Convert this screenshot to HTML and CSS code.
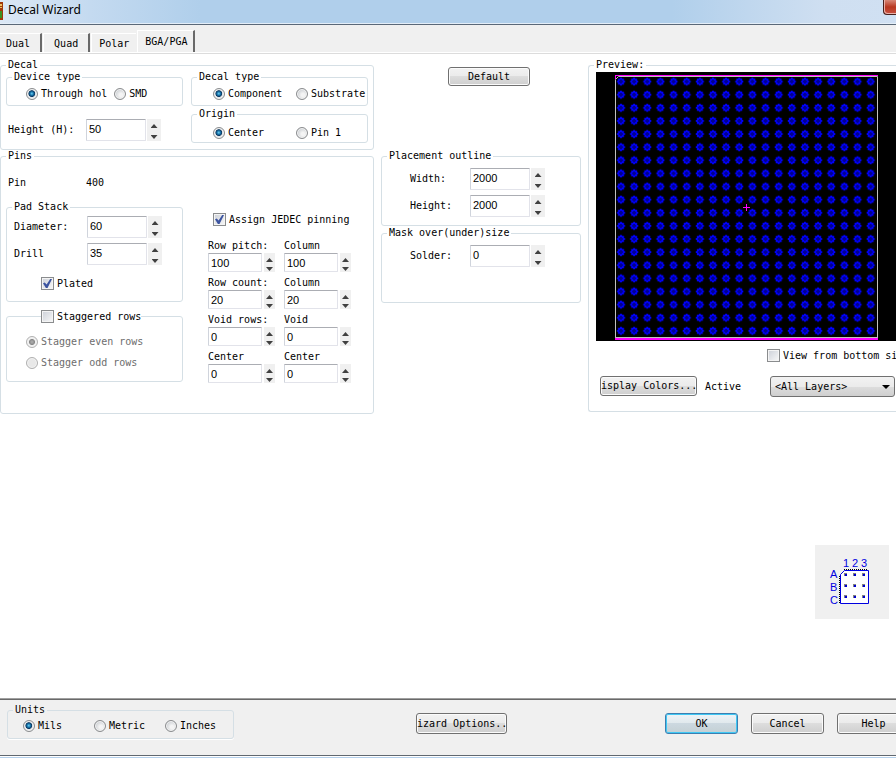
FILE: index.html
```html
<!DOCTYPE html>
<html lang="en">
<head>
<meta charset="utf-8">
<title>Decal Wizard</title>
<link rel="stylesheet" href="styles.css">
</head>
<body>
<header class="titlebar">
  <svg class="app-icon" width="3" height="18" viewBox="0 0 3 18" aria-hidden="true"><path fill="#a03808" d="M0 0h3v18H0z"/><path fill="#f0c060" d="M0 2h2v2H0zM0 5h2v1H0z"/><path fill="#3c9020" d="M0 9h2v7H0z"/></svg>
  <h1>Decal Wizard</h1>
  <button class="close" type="button" aria-label="Close"></button>
</header>
<nav class="tabs" role="tablist">
  <button type="button" role="tab" class="tab">Dual</button>
  <button type="button" role="tab" class="tab">Quad</button>
  <button type="button" role="tab" class="tab">Polar</button>
  <button type="button" role="tab" class="tab active" aria-selected="true">BGA/PGA</button>
</nav>
<main class="page">
  <div class="columns">
    <div class="col">
      <fieldset class="group decal">
        <legend>Decal</legend>
        <div>
          <fieldset class="group">
            <legend>Device type</legend>
            <div class="radios device">
              <label><input type="radio" name="device" checked>Through hol</label>
              <label><input type="radio" name="device">SMD</label>
            </div>
          </fieldset>
          <div class="field height-field">
            <label for="height">Height (H):</label>
            <span class="spin"><input id="height" type="text" value="50"><span class="arrows"><button type="button" aria-label="Up"></button><button type="button" aria-label="Down"></button></span></span>
          </div>
        </div>
        <div class="stack">
          <fieldset class="group">
            <legend>Decal type</legend>
            <div class="radios pair">
              <label><input type="radio" name="dtype" checked>Component</label>
              <label><input type="radio" name="dtype">Substrate</label>
            </div>
          </fieldset>
          <fieldset class="group">
            <legend>Origin</legend>
            <div class="radios pair origin">
              <label><input type="radio" name="origin" checked>Center</label>
              <label><input type="radio" name="origin">Pin 1</label>
            </div>
          </fieldset>
        </div>
      </fieldset>
      <fieldset class="group pins">
        <legend>Pins</legend>
        <div>
          <div class="pin-count"><span>Pin</span><output>400</output></div>
          <fieldset class="group pad-stack">
            <legend>Pad Stack</legend>
            <div class="field">
              <label for="diameter">Diameter:</label>
              <span class="spin"><input id="diameter" type="text" value="60"><span class="arrows"><button type="button" aria-label="Up"></button><button type="button" aria-label="Down"></button></span></span>
            </div>
            <div class="field">
              <label for="drill">Drill</label>
              <span class="spin"><input id="drill" type="text" value="35"><span class="arrows"><button type="button" aria-label="Up"></button><button type="button" aria-label="Down"></button></span></span>
            </div>
            <label class="check plated"><input type="checkbox" checked>Plated</label>
          </fieldset>
          <fieldset class="group staggered">
            <legend><label class="check"><input type="checkbox">Staggered rows</label></legend>
            <div class="stagger-options">
              <label><input type="radio" name="stagger" checked disabled>Stagger even rows</label>
              <label><input type="radio" name="stagger" disabled>Stagger odd rows</label>
            </div>
          </fieldset>
        </div>
        <div class="pinning">
          <label class="check jedec"><input type="checkbox" checked>Assign JEDEC pinning</label>
          <div class="matrix">
            <div class="cell"><label for="rp">Row pitch:</label><span class="spin small"><input id="rp" type="text" value="100"><span class="arrows"><button type="button" aria-label="Up"></button><button type="button" aria-label="Down"></button></span></span></div>
            <div class="cell"><label for="cp">Column</label><span class="spin small"><input id="cp" type="text" value="100"><span class="arrows"><button type="button" aria-label="Up"></button><button type="button" aria-label="Down"></button></span></span></div>
            <div class="cell"><label for="rc">Row count:</label><span class="spin small"><input id="rc" type="text" value="20"><span class="arrows"><button type="button" aria-label="Up"></button><button type="button" aria-label="Down"></button></span></span></div>
            <div class="cell"><label for="cc">Column</label><span class="spin small"><input id="cc" type="text" value="20"><span class="arrows"><button type="button" aria-label="Up"></button><button type="button" aria-label="Down"></button></span></span></div>
            <div class="cell"><label for="vr">Void rows:</label><span class="spin small"><input id="vr" type="text" value="0"><span class="arrows"><button type="button" aria-label="Up"></button><button type="button" aria-label="Down"></button></span></span></div>
            <div class="cell"><label for="vc">Void</label><span class="spin small"><input id="vc" type="text" value="0"><span class="arrows"><button type="button" aria-label="Up"></button><button type="button" aria-label="Down"></button></span></span></div>
            <div class="cell"><label for="cr">Center</label><span class="spin small"><input id="cr" type="text" value="0"><span class="arrows"><button type="button" aria-label="Up"></button><button type="button" aria-label="Down"></button></span></span></div>
            <div class="cell"><label for="ce">Center</label><span class="spin small"><input id="ce" type="text" value="0"><span class="arrows"><button type="button" aria-label="Up"></button><button type="button" aria-label="Down"></button></span></span></div>
          </div>
        </div>
      </fieldset>
    </div>

    <div class="col middle">
      <button type="button" class="btn default">Default</button>
      <fieldset class="group outline">
        <legend>Placement outline</legend>
        <div class="field">
          <label for="ow">Width:</label>
          <span class="spin"><input id="ow" type="text" value="2000"><span class="arrows"><button type="button" aria-label="Up"></button><button type="button" aria-label="Down"></button></span></span>
        </div>
        <div class="field">
          <label for="oh">Height:</label>
          <span class="spin"><input id="oh" type="text" value="2000"><span class="arrows"><button type="button" aria-label="Up"></button><button type="button" aria-label="Down"></button></span></span>
        </div>
      </fieldset>
      <fieldset class="group mask">
        <legend>Mask over(under)size</legend>
        <div class="field">
          <label for="solder">Solder:</label>
          <span class="spin"><input id="solder" type="text" value="0"><span class="arrows"><button type="button" aria-label="Up"></button><button type="button" aria-label="Down"></button></span></span>
        </div>
      </fieldset>
    </div>

    <fieldset class="group preview">
      <legend>Preview:</legend>
      <div class="board">
        <svg width="300" height="269" viewBox="0 0 300 269" role="img" aria-label="Pin array">
          <defs>
            <pattern id="pad" x="18.4" y="3" width="13.14" height="13.12" patternUnits="userSpaceOnUse">
              <path fill="#0000ff" d="M5.6 2.6h2v1h2v2h1v2h-1v2h-2v1h-2v-1h-2v-2h-1v-2h1v-2h2z"/>
              <path fill="#000090" d="M5.6 4.6h2v1h1v2h-1v1h-2v-1h-1v-2h1z"/>
            </pattern>
          </defs>
          <rect x="18.4" y="3" width="262.8" height="262.4" fill="url(#pad)"/>
          <path d="M19.500 266V7.500L22.500 4.500H281.500V266" fill="none" stroke="#c0c0c0"/>
          <path d="M19 265.500H282" stroke="#c0c0c0"/>
          <path d="M19 3.500H282M19.500 3V7" stroke="#ff00ff" fill="none"/>
          <path d="M19 267H282" stroke="#ff00ff" stroke-width="2"/>
          <path d="M147 135.500h7M150.500 132v7" stroke="#ff00ff"/>
        </svg>
      </div>
      <label class="check bottom-view"><input type="checkbox">View from bottom si</label>
      <div class="layer-row">
        <button type="button" class="btn">isplay Colors...</button>
        <label for="layers">Active</label>
        <span class="select"><select id="layers"><option>&lt;All Layers&gt;</option></select></span>
      </div>
    </fieldset>
  </div>
  <div class="numbering">
    <svg width="74" height="74" viewBox="0 0 74 74" role="img" aria-label="Pin numbering">
      <g class="numbering-text"><text x="28" y="22">1</text><text x="37" y="22">2</text><text x="46" y="22">3</text><text x="15" y="33">A</text><text x="15" y="46">B</text><text x="15" y="59">C</text></g>
      <path d="M25.500 58.500V29.500L29.500 25.500H53.500V58.500Z" fill="#fff" stroke="#0000e0"/>
      <path d="M24.500 58V30M29 24.500H53" stroke="#000" stroke-dasharray="1 1" fill="none"/>
      <path d="M29 29.500h3m6 0h3m6 0h3M29 40.500h3m6 0h3m6 0h3M29 51.500h3m6 0h3m6 0h3" stroke="#808080" stroke-width="3"/>
      <path d="M30 30h2m7 0h2m7 0h2M30 41h2m7 0h2m7 0h2M30 52h2m7 0h2m7 0h2" stroke="#0000d0" stroke-width="2"/>
    </svg>
  </div>
</main>
<footer class="footer">
  <fieldset class="group units">
    <legend>Units</legend>
    <div class="radios">
      <label><input type="radio" name="units" checked>Mils</label>
      <label><input type="radio" name="units">Metric</label>
      <label><input type="radio" name="units">Inches</label>
    </div>
  </fieldset>
  <button type="button" class="btn options">izard Options..</button>
  <div class="actions">
    <button type="button" class="btn primary">OK</button>
    <button type="button" class="btn">Cancel</button>
    <button type="button" class="btn">Help</button>
  </div>
</footer>
</body>
</html>
```
FILE: styles.css
```css
* { box-sizing: border-box; }
body {
  margin: 0;
  min-height: 100vh;
  display: flex;
  flex-direction: column;
  overflow: hidden;
  background: #fff;
  color: #000;
  font: 10px/12px "DejaVu Sans Mono", "Liberation Mono", monospace;
  white-space: nowrap;
}
button, input, select { font: inherit; color: inherit; margin: 0; padding: 0; }

/* Title bar */
.titlebar {
  display: flex;
  align-items: flex-start;
  height: 25px;
  border-bottom: 1px solid #5a6878;
  box-shadow: inset 0 -1px #e4eef8;
  background: linear-gradient(90deg, #dce8f5 0, #c4daf0 90px, #b0cfeb 200px, #b0cfeb 75%, #cfdff1 92%, #d0e0f2 100%);
}
.app-icon { margin-top: 2px; }
.titlebar h1 { margin: 0 0 0 5px; font: 12px/19px "Noto Sans", "Open Sans", sans-serif; }
.close {
  width: 13px;
  height: 15px;
  margin-left: auto;
  border: 1px solid #48201c;
  border-width: 0 0 1px 1px;
  border-radius: 0 0 0 4px;
  background: linear-gradient(#d88878, #b83820 50%, #c85040);
  box-shadow: inset 1px -1px #e8b0a8;
}

/* Tabs */
.tabs {
  display: flex;
  align-items: flex-end;
  gap: 1px;
  height: 29px;
  background: #f0f0f0;
  border-bottom: 1px solid #dcdcdc;
  box-shadow: inset 0 -1px #fff;
}
.tab {
  height: 19px;
  padding: 2px 10px 0;
  margin-bottom: 1px;
  border: solid;
  border-width: 1px 2px 0 1px;
  border-color: #fff #696969 #fff #fff;
  background: #f0f0f0;
}
.tab:first-child { padding-left: 6px; border-left: 0; }
.tab:nth-child(3) { padding: 2px 7px 0; border-right-width: 0; }
.tab.active { height: 22px; padding: 0 6px 0 7px; }

/* Page */
.page { flex: 1; display: flex; flex-direction: column; padding-top: 5px; }
.columns { display: grid; grid-template-columns: 374px 200px minmax(308px, 1fr); gap: 7px; align-items: start; }
.group {
  margin: 0;
  padding: 0;
  min-width: 0;
  border: 1px solid #d5dfe5;
  border-radius: 3px;
}
.group > legend { margin-left: 5px; padding: 0 2px; }
.decal, .pins { display: grid; grid-template-columns: 177px 177px; gap: 8px; padding: 0 5px 6px; }
.decal > legend, .pins > legend { margin-left: 0; }
.pins { padding-bottom: 30px; }
.stack { display: grid; gap: 2px; }

label { display: flex; align-items: center; }
.radios { display: flex; height: 22px; padding-left: 19px; }
.radios label { gap: 3px; }
.device { gap: 7px; }
.pair { display: grid; grid-template-columns: 83px auto; padding-left: 21px; justify-content: start; }
.origin { padding-top: 4px; }

input[type="radio"] {
  appearance: none;
  flex: none;
  width: 12px;
  height: 12px;
  border: 1px solid #8a8c8e;
  border-radius: 50%;
  background: radial-gradient(circle at 60% 60%, #f4f4f4 20%, #c8ccd0 75%);
  box-shadow: inset 0 0 0 1px #f4f4f4;
}
input[type="radio"]:checked {
  background: radial-gradient(circle at 48% 46%, #70d0f0 0, #1878b0 22%, #0c3860 40%, #e0e4e8 50%);
}
input[type="radio"]:disabled { border-color: #b0b0b0; background: #e8e8e8; }
input[type="radio"]:disabled:checked { background: radial-gradient(circle, #b0b0b0 0, #888 38%, #eee 46%); }
.check { gap: 3px; }
input[type="checkbox"] {
  appearance: none;
  flex: none;
  display: grid;
  place-items: center;
  width: 13px;
  height: 13px;
  border: 1px solid #8a8c8e;
  background: linear-gradient(135deg, #ccd0d8, #f8f8f8);
  box-shadow: inset 0 0 0 1px #f4f4f4;
}
input[type="checkbox"]:checked::before {
  content: "";
  width: 9px;
  height: 9px;
  background: #3c54a0;
  clip-path: polygon(0 48%, 20% 38%, 40% 62%, 80% 0, 100% 0, 50% 100%, 32% 100%);
}

/* Spin fields */
.field { display: grid; grid-template-columns: 78px auto; justify-content: start; }
.spin { display: flex; gap: 1px; height: 22px; }
.spin input {
  width: 60px;
  padding: 0 0 3px 2px;
  border: 1px solid #e2e3ea;
  border-top-color: #abadb3;
  border-left-color: #d0d4dc;
  border-radius: 1px;
  background: #fff;
  font: 11px/14px "Liberation Sans", sans-serif;
}
.arrows {
  display: flex;
  flex-direction: column;
  justify-content: space-between;
  align-items: center;
  width: 14px;
  padding: 5px 0 2px;
  background: #f0f0f0;
}
.arrows button {
  width: 7px;
  height: 4px;
  border: 0;
  background: #404040;
  clip-path: polygon(50% 0, 100% 100%, 0 100%);
}
.arrows button + button { clip-path: polygon(0 0, 100% 0, 50% 100%); }
.small { height: 19px; gap: 2px; }
.small input { width: 54px; padding-bottom: 0; }
.small .arrows { width: 11px; padding: 5px 0 1px; }
.height-field { margin: 13px 0 0 2px; }

/* Pins */
.pin-count { display: grid; grid-template-columns: 78px auto; justify-content: start; padding: 15px 0 12px 2px; }
.pad-stack { padding: 3px 0 11px 7px; }
.pad-stack .field { grid-template-columns: 73px auto; margin-bottom: 5px; }
.pad-stack .plated { margin: 12px 0 0 27px; }
.pad-stack > legend { margin-left: -2px; }
.staggered { margin-top: 8px; padding-bottom: 12px; }
.staggered > legend { margin-left: 34px; padding: 0; background: #fff; }
.stagger-options { display: grid; gap: 9px; padding: 13px 0 0 19px; color: #6d6d6d; }
.stagger-options label { gap: 3px; }
.pinning { padding-top: 51px; }
.jedec { margin-left: 22px; }
.matrix { display: grid; grid-template-columns: 68px 68px; gap: 5px 8px; padding: 14px 0 0 17px; }
.cell { display: grid; gap: 1px; }

/* Middle column */
.middle .field { grid-template-columns: 60px auto; padding-left: 28px; }
.btn {
  height: 21px;
  border: 1px solid #707070;
  border-radius: 3px;
  background: linear-gradient(#f2f2f2, #ebebeb 50%, #dddddd 50%, #cfcfcf);
  box-shadow: inset 0 0 0 1px #fbfbfb;
}
.default { display: block; width: 82px; height: 19px; margin: 8px 0 64px 67px; }
.outline { padding: 6px 0 8px; display: grid; gap: 5px; }
.mask { margin-top: 1px; padding: 6px 0 35px; }

/* Preview */
.preview { padding: 1px 0 14px 7px; border-right: 0; border-radius: 3px 0 0 3px; }
.preview > legend { margin-left: -2px; }
.board { background: #000; }
.board svg { display: block; }
.bottom-view { margin: 8px 0 0 171px; }
.layer-row { display: grid; grid-template-columns: 97px 57px 125px; gap: 8px; padding: 14px 0 0 4px; }
.layer-row .btn { height: 20px; }
.select { position: relative; }
.select select {
  appearance: none;
  width: 100%;
  height: 21px;
  padding-left: 4px;
  border: 1px solid #707070;
  border-radius: 3px;
  background: linear-gradient(#f2f2f2, #ebebeb 50%, #dddddd 50%, #cfcfcf);
}
.select::after {
  content: "";
  position: absolute;
  right: 5px;
  top: 9px;
  border: 4px solid transparent;
  border-top-color: #000;
  border-bottom: 0;
}

.numbering { align-self: flex-end; margin: auto 7px 79px 0; background: #f0f0f0; }
.numbering svg { display: block; }
.numbering-text { font: 11px "Liberation Sans", sans-serif; fill: #0000e0; }

/* Footer */
.footer {
  display: flex;
  align-items: flex-start;
  height: 60px;
  padding: 5px 0 0 7px;
  border-top: 1px solid #a0a0a0;
  border-bottom: 1px solid #b4d0ec;
  background: #f0f0f0;
  box-shadow: inset 0 1px #696969, inset 0 -1px #fff, inset 0 -2px #606870;
}
.units { width: 227px; border-color: #d5dfe5; box-shadow: 0 1px #fff; }
.units .radios { display: grid; grid-template-columns: repeat(3, 71px); height: 22px; padding: 0 0 2px 15px; }
.options { width: 91px; margin: 9px 0 0 182px; }
.actions { display: flex; gap: 13px; margin: 9px -14px 0 auto; }
.actions .btn { width: 73px; }
.primary { border-color: #3c7fb1; box-shadow: inset 0 0 0 1px #40c8f4; background: linear-gradient(#eef4f8, #e0e8ec 50%, #ccd8e0 50%, #c4d0d4); }
```
